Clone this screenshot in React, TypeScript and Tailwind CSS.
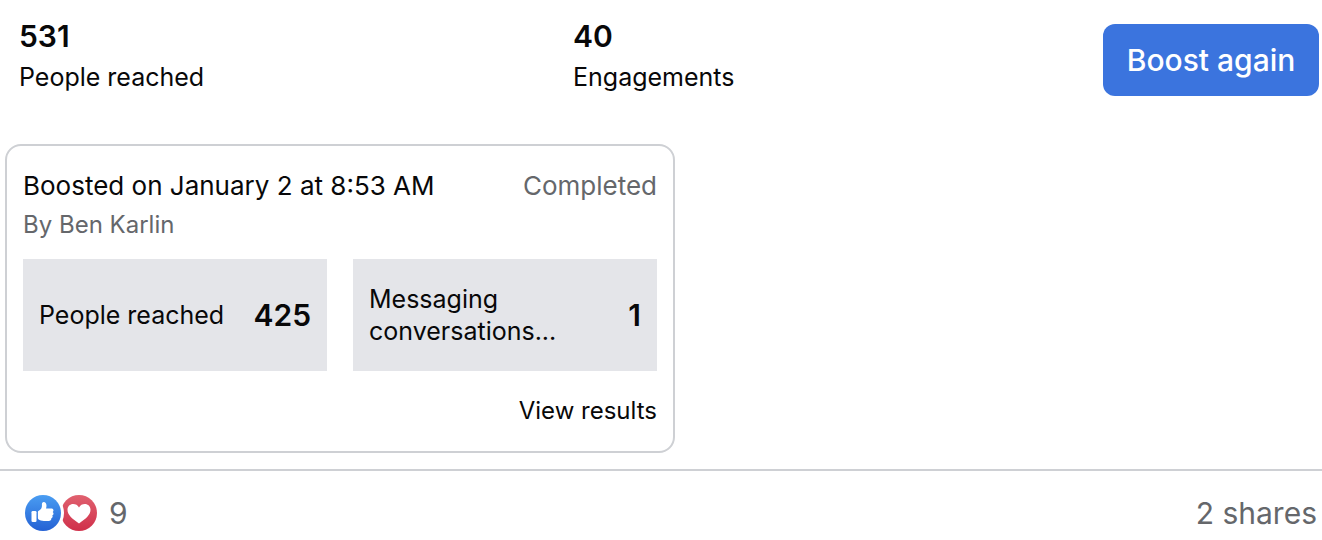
const stats = [
  { value: "531", label: "People reached" },
  { value: "40", label: "Engagements" },
]

const results = [
  { label: "People reached", value: "425" },
  { label: "Messaging conversations...", value: "1" },
]

function LikeIcon() {
  return (
    <svg viewBox="0 0 36 36" className="size-9" aria-hidden="true">
      <defs>
        <linearGradient id="like" x1="0" y1="0" x2="0" y2="1">
          <stop offset="0" stopColor="#4a9df2" />
          <stop offset="1" stopColor="#2461d4" />
        </linearGradient>
      </defs>
      <circle cx="18" cy="18" r="18" fill="url(#like)" />
      <rect x="6.5" y="16" width="5" height="11" rx="1.3" fill="#fff" />
      <path
        d="M14.500 15.200c1.800-1.200 2.600-3 2.400-5.200-.1-1.700.5-2.900 1.800-2.900 1.700 0 2.800 1.600 2.800 3.600 0 1.100-.3 2-.5 2.700h5.300c1.300 0 2.200.8 2.200 1.900 0 .7-.3 1.300-.8 1.700.5.300.8.900.8 1.500 0 .9-.5 1.600-1.200 1.900.3.400.4.900.3 1.400-.1.800-.7 1.400-1.500 1.600.2.400.2.800.1 1.100-.3.900-1.100 1.400-2.300 1.400h-5c-2.300 0-4.200-.5-5.300-1.300-.5-.4-.7-.9-.7-1.500v-6c0-.8.500-1.400 1.600-1.900z"
        fill="#fff"
      />
    </svg>
  )
}

function LoveIcon() {
  return (
    <svg viewBox="0 0 36 36" className="size-9" aria-hidden="true">
      <defs>
        <linearGradient id="love" x1="0" y1="0" x2="0" y2="1">
          <stop offset="0" stopColor="#e0616f" />
          <stop offset="1" stopColor="#d0304a" />
        </linearGradient>
      </defs>
      <circle cx="18" cy="18" r="18" fill="url(#love)" />
      {/* white edge left by the neighbouring reaction */}
      <circle cx="-18" cy="18" r="21" fill="#fff" />
      <path
        d="M18 28.500C10.500 23.500 6.500 19.500 6.500 14.800 6.500 11.400 9 9 12.200 9c2.400 0 4.600 1.200 5.800 3.400C19.200 10.200 21.400 9 23.800 9c3.200 0 5.700 2.400 5.700 5.800 0 4.700-4 8.700-11.500 13.700z"
        fill="#fff"
      />
    </svg>
  )
}

export default function App() {
  return (
    <main className="bg-white font-['Inter',sans-serif] text-[25px] leading-8 text-[#080809]">
      <section className="grid grid-cols-[23fr_22fr_auto] items-start pt-4 pr-[3px] pb-[46px] pl-[19px]">
        {stats.map((stat) => (
          <div key={stat.label}>
            <p className="text-[30px] leading-10 font-semibold">{stat.value}</p>
            <p className="leading-[42px]">{stat.label}</p>
          </div>
        ))}
        <button className="mt-2 h-[72px] w-[216px] rounded-xl bg-[#3b74de] text-[30px] font-medium text-white">
          Boost again
        </button>
      </section>

      <section className="ml-[5px] max-w-[670px] rounded-2xl border-2 border-[#ced0d4] px-4 py-6">
        <div className="flex justify-between text-[26px]">
          <h2>Boosted on January 2 at 8:53 AM</h2>
          <span className="text-[#65676b]">Completed</span>
        </div>
        <p className="mt-[7px] text-[24px] text-[#65676b]">By Ben Karlin</p>
        <div className="mt-[18px] grid grid-cols-2 gap-[26px]">
          {results.map((item) => (
            <div key={item.label} className="flex h-28 items-center justify-between bg-[#e4e5e9] px-4">
              <span className="max-w-[200px]">{item.label}</span>
              <span className="text-[30px] font-semibold">{item.value}</span>
            </div>
          ))}
        </div>
        <div className="mt-6 flex justify-end">
          <a href="#results" className="text-[24px]">View results</a>
        </div>
      </section>

      <footer className="mt-4 flex items-center border-t-2 border-[#ced0d4] pt-[22px] pr-[5px] pl-[25px] text-[30px] leading-10 text-[#65676b]">
        <LikeIcon />
        <LoveIcon />
        <span className="ml-3">9</span>
        <span className="ml-auto">2 shares</span>
      </footer>
    </main>
  )
}
